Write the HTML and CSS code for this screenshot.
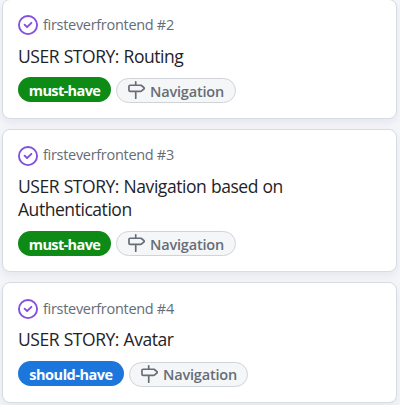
FILE: index.html
```html
<!DOCTYPE html>
<html lang="en">
<head>
<meta charset="utf-8">
<title>Board</title>
<link rel="stylesheet" href="styles.css">
</head>
<body>
<svg class="defs" width="0" height="0">
  <symbol id="closed" viewBox="0 0 16 16"><path d="M11.28 6.78a.75.75 0 0 0-1.06-1.06L7.25 8.69 5.78 7.22a.75.75 0 0 0-1.06 1.06l2 2a.75.75 0 0 0 1.06 0l3.5-3.5Z"/><path d="M16 8A8 8 0 1 1 0 8a8 8 0 0 1 16 0Zm-1.5 0a6.5 6.5 0 1 0-13 0 6.5 6.5 0 0 0 13 0Z"/></symbol>
  <symbol id="milestone" viewBox="0 0 16 16"><path d="M7.75 0a.75.75 0 0 1 .75.75V3h3.634c.414 0 .814.147 1.13.414l2.07 1.75a1.75 1.75 0 0 1 0 2.672l-2.07 1.75a1.75 1.75 0 0 1-1.13.414H8.5v5.25a.75.75 0 0 1-1.5 0V10H2.75A1.75 1.75 0 0 1 1 8.25v-3.5C1 3.784 1.784 3 2.75 3H7V.75A.75.75 0 0 1 7.75 0Zm4.384 8.5a.25.25 0 0 0 .161-.06l2.07-1.75a.248.248 0 0 0 0-.38l-2.07-1.75a.25.25 0 0 0-.161-.06H2.75a.25.25 0 0 0-.25.25v3.5c0 .138.112.25.25.25h9.384Z"/></symbol>
</svg>
<main class="column">
  <article class="card first">
    <div class="meta"><svg class="state"><use href="#closed"/></svg><span>firsteverfrontend #2</span></div>
    <h3 class="title">USER STORY: Routing</h3>
    <div class="labels"><span class="label must">must-have</span><span class="label milestone"><svg class="sign"><use href="#milestone"/></svg><span>Navigation</span></span></div>
  </article>
  <article class="card second">
    <div class="meta"><svg class="state"><use href="#closed"/></svg><span>firsteverfrontend #3</span></div>
    <h3 class="title">USER STORY: Navigation based on<br>Authentication</h3>
    <div class="labels even"><span class="label must">must-have</span><span class="label milestone"><svg class="sign"><use href="#milestone"/></svg><span>Navigation</span></span></div>
  </article>
  <article class="card third">
    <div class="meta"><svg class="state"><use href="#closed"/></svg><span>firsteverfrontend #4</span></div>
    <h3 class="title">USER STORY: Avatar</h3>
    <div class="labels"><span class="label should">should-have</span><span class="label milestone"><svg class="sign"><use href="#milestone"/></svg><span>Navigation</span></span></div>
  </article>
</main>
</body>
</html>
```
FILE: styles.css
```css
* { box-sizing: border-box; }
body {
  margin: 0;
  height: 405px;
  overflow: hidden;
  background: #f5f6fa;
  font-family: "Open Sans", "Noto Sans", sans-serif;
}
.defs { display: block; }
.column {
  display: flex;
  flex-direction: column;
  gap: 10px;
  width: 395px;
  margin: -1px 0 0 2px;
}
.card {
  flex: none;
  height: 120px;
  padding: 15px;
  border: 1px solid #d5dce3;
  border-radius: 8px;
  background: #fff;
  box-shadow: 0 4px 8px rgba(140, 149, 159, .15);
}
.second { height: 143px; padding-top: 16px; }
.third { height: 121px; padding-top: 16px; }
.meta {
  display: flex;
  align-items: center;
  gap: 5px;
  height: 20px;
  color: #656d76;
  font-size: 14.5px;
  line-height: 20px;
  white-space: nowrap;
}
.meta span { margin-top: -1px; letter-spacing: -.3px; }
.second .meta span { margin-top: -2px; }
.state { width: 20px; height: 20px; fill: #8250df; }
.title {
  margin: 10px 0 0;
  color: #1f2328;
  font-size: 17.5px;
  font-weight: 400;
  line-height: 23px;
  letter-spacing: -.45px;
  word-spacing: .5px;
  white-space: nowrap;
}
.second .title, .third .title { margin-top: 9px; }
.labels {
  display: flex;
  gap: 5px;
  margin-top: 9px;
}
.second .labels, .third .labels { margin-top: 10px; }
.label {
  display: flex;
  align-items: center;
  justify-content: center;
  width: 93px;
  height: 25px;
  border-radius: 13px;
  color: #fff;
  font-size: 14.5px;
  font-weight: 700;
  letter-spacing: -.62px;
  white-space: nowrap;
}
.must, .should { padding-top: 1px; }
.must { background: #0e8a16; }
.should { width: 106px; background: #1d76db; letter-spacing: -.48px; }
.milestone {
  justify-content: flex-start;
  width: 120px;
  margin-top: 1px;
  padding-left: 10px;
  border: 1px solid #d0d4d9;
  background: #f5f6f8;
  color: #656d76;
  font-weight: 600;
  letter-spacing: -.18px;
  gap: 5px;
}
.milestone span { padding-top: 1px; }
.even .milestone { margin-top: 0; }
.third .milestone { width: 119px; }
.third .milestone span { padding-top: 0; }
.sign { width: 18px; height: 18px; margin-bottom: 1px; fill: #656d76; }
```
